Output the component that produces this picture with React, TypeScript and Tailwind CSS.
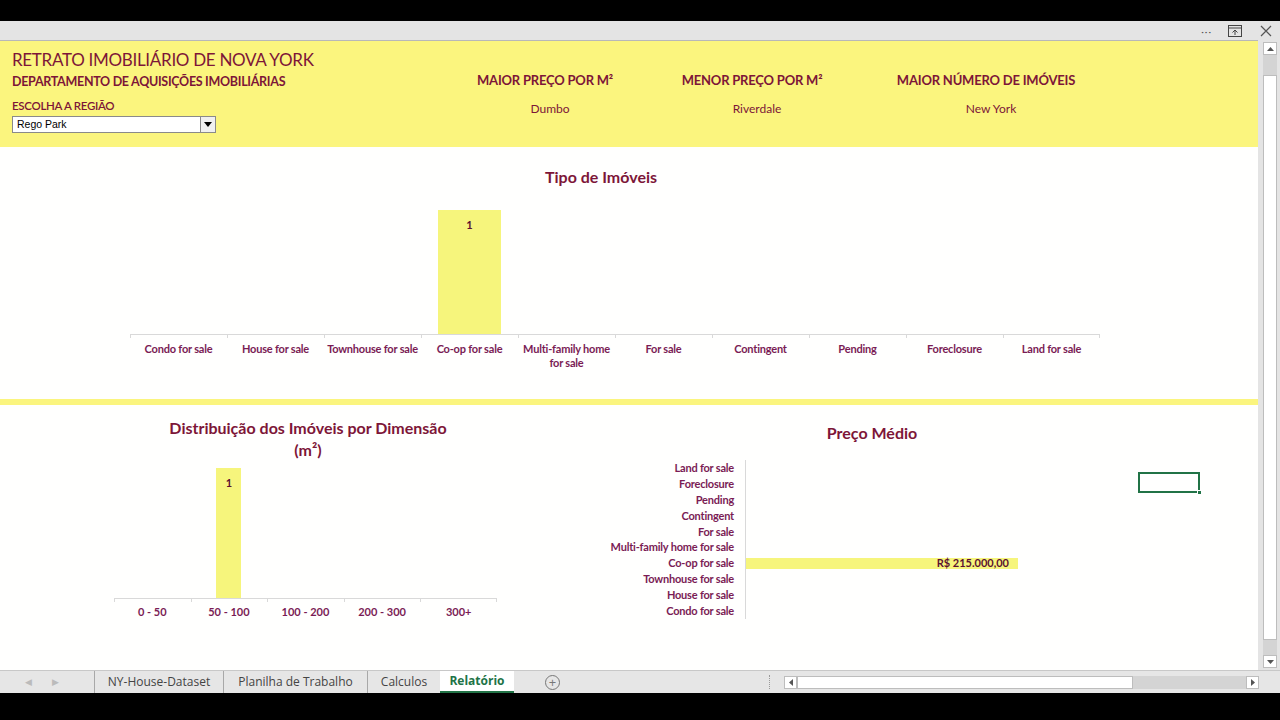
import React from 'react';

const TIPOS = [
  'Condo for sale',
  'House for sale',
  'Townhouse for sale',
  'Co-op for sale',
  'Multi-family home for sale',
  'For sale',
  'Contingent',
  'Pending',
  'Foreclosure',
  'Land for sale',
];

const FAIXAS = ['0 - 50', '50 - 100', '100 - 200', '200 - 300', '300+'];

const PRECO = [
  'Land for sale',
  'Foreclosure',
  'Pending',
  'Contingent',
  'For sale',
  'Multi-family home for sale',
  'Co-op for sale',
  'Townhouse for sale',
  'House for sale',
  'Condo for sale',
];

function Metric({ title, value, className }: { title: string; value: string; className: string }) {
  return (
    <div className={`flex flex-col items-center ${className}`}>
      <span className="text-[13px] font-bold leading-[16px] tracking-[-0.2px] text-[#7d1638]">{title}</span>
      <span className="mt-[13px] pl-[10px] text-[12px] leading-[16px] text-[#7d1638]">{value}</span>
    </div>
  );
}

export default function App() {
  return (
    <div className="flex h-[720px] w-[1280px] flex-col overflow-hidden bg-black font-['Lato',sans-serif]">
      {/* top black strip */}
      <div className="h-[21px] shrink-0 bg-black" />

      {/* window toolbar */}
      <div className="flex h-[19px] shrink-0 items-center justify-end gap-[16px] bg-[#e4e4e4] pr-[8px] text-[#555]">
        <span className="text-[10px] leading-none tracking-[1px]">···</span>
        <svg width="14" height="12" viewBox="0 0 14 12" className="mr-[2px]">
          <rect x="0.5" y="0.5" width="13" height="11" fill="none" stroke="#444" />
          <line x1="0.5" y1="3" x2="13.5" y2="3" stroke="#444" />
          <path d="M7 10V5M4.5 7.5L7 5l2.5 2.5" fill="none" stroke="#444" />
        </svg>
        <svg width="12" height="12" viewBox="0 0 12 12">
          <path d="M1 1l10 10M11 1L1 11" stroke="#555" strokeWidth="1.2" />
        </svg>
      </div>

      {/* sheet + vertical scrollbar */}
      <div className="flex h-[630px] shrink-0">
        <div className="relative flex w-[1258px] flex-col border-t border-[#b8b8b8] bg-[#fffffe]">
          {/* header */}
          <div className="flex h-[106px] shrink-0 bg-[#fbf57e]">
            <div className="w-[460px] shrink-0 pl-[12px] pt-[8px] text-[#7d1638]">
              <div className="text-[17px] leading-[22px] tracking-[-0.3px]">RETRATO IMOBILIÁRIO DE NOVA YORK</div>
              <div className="mt-[3px] text-[12.5px] font-bold leading-[16px] tracking-[-0.3px]">
                DEPARTAMENTO DE AQUISIÇÕES IMOBILIÁRIAS
              </div>
              <div className="mt-[9px] text-[11.5px] font-semibold leading-[14px] tracking-[-0.3px]">ESCOLHA A REGIÃO</div>
              <div className="mt-[3px] flex h-[17px] w-[204px] items-center border border-[#8a8a8a] bg-white pl-[4px] font-['Liberation_Sans',sans-serif] text-[10.5px] text-black">
                <span className="flex-1">Rego Park</span>
                <span className="flex h-full w-[15px] items-center justify-center border-l border-[#8a8a8a] bg-[#f0f0f0]">
                  <svg width="8" height="5" viewBox="0 0 8 5">
                    <path d="M0 0h8L4 5z" fill="#000" />
                  </svg>
                </span>
              </div>
            </div>
            <div className="flex pt-[31px]">
              <Metric title="MAIOR PREÇO POR M²" value="Dumbo" className="w-[170px]" />
              <Metric title="MENOR PREÇO POR M²" value="Riverdale" className="ml-[37px] w-[170px]" />
              <Metric title="MAIOR NÚMERO DE IMÓVEIS" value="New York" className="ml-[49px] w-[200px]" />
            </div>
          </div>

          {/* chart 1: Tipo de Imóveis */}
          <div className="h-[252px] shrink-0">
            <div className="w-[1202px] pt-[20px] text-center text-[16px] font-bold leading-[20px] text-[#7d1638]">
              Tipo de Imóveis
            </div>
            <div className="ml-[130px] mt-[23px] w-[970px]">
              <div className="flex h-[125px] items-end border-b border-[#d9d9d9]">
                {TIPOS.map((t, i) => (
                  <div key={t} className="flex h-full w-[97px] items-end justify-center">
                    {i === 3 && (
                      <div className="flex h-full w-[63px] justify-center bg-[#f6f57c] pt-[7px] text-[11px] font-bold text-[#5b1030]">
                        1
                      </div>
                    )}
                  </div>
                ))}
              </div>
              <div className="flex h-[3px]">
                {TIPOS.map((t) => (
                  <div key={t} className="w-[97px] border-l border-[#d9d9d9] last:border-r" />
                ))}
              </div>
              <div className="mt-[4px] flex">
                {TIPOS.map((t) => (
                  <div
                    key={t}
                    className="w-[97px] px-[2px] text-center text-[11px] font-bold leading-[14px] tracking-[-0.2px] text-[#7a1c55]"
                  >
                    {t}
                  </div>
                ))}
              </div>
            </div>
          </div>

          {/* divider */}
          <div className="h-[6px] shrink-0 bg-[#fbf57e]" />

          {/* lower charts */}
          <div className="flex flex-1">
            {/* chart 2 */}
            <div className="w-[560px] shrink-0">
              <div className="w-[616px] pt-[12px] text-center text-[16px] font-bold leading-[22px] text-[#7d1638]">
                Distribuição dos Imóveis por Dimensão
                <br />
                (m²)
              </div>
              <div className="ml-[114px] mt-[7px] w-[383px]">
                <div className="flex h-[131px] items-end border-b border-[#d9d9d9]">
                  {FAIXAS.map((f, i) => (
                    <div key={f} className="flex h-full w-[76.6px] items-end justify-center">
                      {i === 1 && (
                        <div className="flex h-full w-[25px] justify-center bg-[#f6f57c] pt-[7px] text-[11px] font-bold text-[#5b1030]">
                          1
                        </div>
                      )}
                    </div>
                  ))}
                </div>
                <div className="flex h-[3px]">
                  {FAIXAS.map((f) => (
                    <div key={f} className="w-[76.6px] border-l border-[#d9d9d9] last:border-r" />
                  ))}
                </div>
                <div className="mt-[3px] flex">
                  {FAIXAS.map((f) => (
                    <div key={f} className="w-[76.6px] text-center text-[11px] font-bold leading-[14px] text-[#7a1c55]">
                      {f}
                    </div>
                  ))}
                </div>
              </div>
            </div>

            {/* chart 3 */}
            <div className="flex-1">
              <div className="w-[624px] pt-[18px] text-center text-[16px] font-bold leading-[20px] text-[#7d1638]">
                Preço Médio
              </div>
              <div className="mt-[17px] flex">
                <div className="w-[185px] shrink-0 pr-[11px]">
                  {PRECO.map((p) => (
                    <div key={p} className="h-[15.9px] text-right text-[11px] font-bold leading-[16px] tracking-[-0.2px] text-[#7a1c55]">
                      {p}
                    </div>
                  ))}
                </div>
                <div className="w-[300px] border-l border-[#d9d9d9]">
                  {PRECO.map((p, i) => (
                    <div key={p} className="flex h-[15.9px] items-center">
                      {i === 6 && (
                        <div className="flex h-[11px] w-[272px] items-center justify-end bg-[#f6f57c] pr-[9px] text-[11px] font-bold text-[#5b1030]">
                          R$ 215.000,00
                        </div>
                      )}
                    </div>
                  ))}
                </div>
              </div>
            </div>
          </div>

          {/* selected cell */}
          <div className="absolute left-[1138px] top-[431px] h-[21px] w-[62px] border-2 border-[#217346]">
            <div className="absolute -bottom-[4px] -right-[4px] h-[5px] w-[5px] border border-white bg-[#217346]" />
          </div>
        </div>

        {/* vertical scrollbar */}
        <div className="flex w-[22px] flex-col items-center bg-[#e4e4e4] pb-[1px] pl-[2px] pt-[2px]">
          <div className="flex h-[13px] w-[14px] items-center justify-center border border-[#bdbdbd] bg-white">
            <svg width="7" height="4" viewBox="0 0 7 4">
              <path d="M0 4h7L3.5 0z" fill="#555" />
            </svg>
          </div>
          <div className="h-[20px] w-[14px] bg-[#d4d4d4]" />
          <div className="h-[565px] w-[14px] border border-[#bdbdbd] bg-white" />
          <div className="h-[15px] w-[14px] bg-[#d4d4d4]" />
          <div className="flex h-[13px] w-[14px] items-center justify-center border border-[#bdbdbd] bg-white">
            <svg width="7" height="4" viewBox="0 0 7 4">
              <path d="M0 0h7L3.5 4z" fill="#555" />
            </svg>
          </div>
        </div>
      </div>

      {/* sheet tabs */}
      <div className="flex h-[23px] shrink-0 items-center border-t border-[#c8c8c8] bg-[#e6e6e6] font-['Open_Sans',sans-serif] text-[12px] text-[#444]">
        <div className="flex w-[94px] shrink-0 items-center gap-[20px] pl-[25px] text-[9px] text-[#bbb]">
          <span>◀</span>
          <span>▶</span>
        </div>
        <div className="flex h-full w-[129px] items-center justify-center border-l border-[#a8a8a8]">NY-House-Dataset</div>
        <div className="flex h-full w-[144px] items-center justify-center border-l border-[#a8a8a8]">Planilha de Trabalho</div>
        <div className="flex h-full w-[73px] items-center justify-center border-l border-[#a8a8a8]">Calculos</div>
        <div className="flex h-full w-[74px] items-center justify-center border-b-2 border-[#217346] bg-white font-bold text-[#217346]">
          Relatório
        </div>
        <div className="ml-[31px] flex h-[15px] w-[15px] items-center justify-center rounded-full border border-[#777] text-[13px] leading-none text-[#777]">
          +
        </div>
        <div className="ml-[209px] h-[14px] w-[1px] border-l border-dotted border-[#999]" />
        <div className="ml-[14px] flex h-[13px] items-center">
          <div className="flex h-[13px] w-[13px] items-center justify-center border border-[#bdbdbd] bg-white">
            <svg width="4" height="7" viewBox="0 0 4 7">
              <path d="M4 0v7L0 3.5z" fill="#555" />
            </svg>
          </div>
          <div className="h-[13px] w-[336px] border border-[#bdbdbd] bg-white" />
          <div className="h-[13px] w-[113px] bg-[#d4d4d4]" />
          <div className="flex h-[13px] w-[13px] items-center justify-center border border-[#bdbdbd] bg-white">
            <svg width="4" height="7" viewBox="0 0 4 7">
              <path d="M0 0v7L4 3.5z" fill="#555" />
            </svg>
          </div>
        </div>
      </div>

      <div className="flex-1 bg-black" />
    </div>
  );
}
